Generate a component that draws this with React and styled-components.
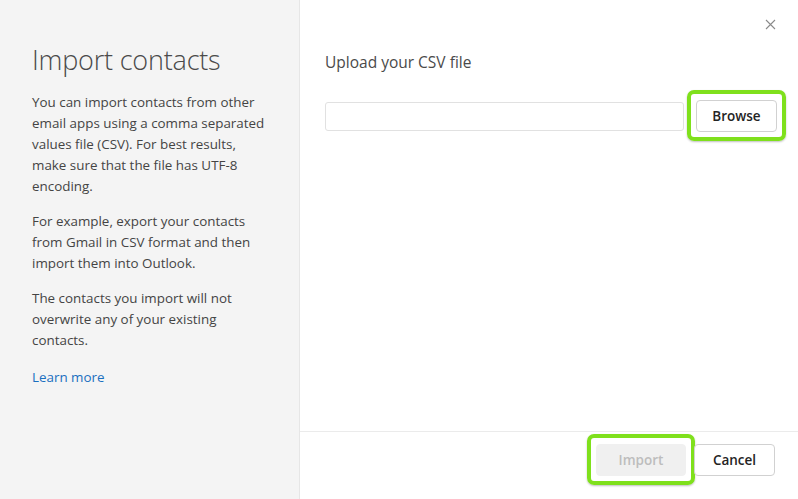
import React from "react";
import styled, { createGlobalStyle } from "styled-components";

const Global = createGlobalStyle`
  html, body {
    margin: 0;
    padding: 0;
    background: #ffffff;
  }
  body {
    font-family: "Open Sans", "Noto Sans", "Liberation Sans", sans-serif;
    color: #424242;
  }
`;

const Dialog = styled.div`
  display: flex;
  width: 798px;
  height: 499px;
  background: #fff;
  overflow: hidden;
`;

const Side = styled.aside`
  width: 300px;
  flex: none;
  box-sizing: border-box;
  padding: 40px 30px 0 32px;
  background: #f4f4f4;
  border-right: 1px solid #e6e6e6;
`;

const Title = styled.h1`
  margin: 0 0 12px;
  font-size: 27px;
  font-weight: 300;
  line-height: 40px;
  color: #4a4a4a;
  letter-spacing: -0.2px;
`;

const Para = styled.p`
  margin: 0 0 14px;
  font-size: 13.4px;
  line-height: 21px;
  color: #444;
`;

const LearnMore = styled.a`
  display: inline-block;
  margin-top: -3px;
  font-size: 13.4px;
  line-height: 21px;
  color: #1a6fc0;
  text-decoration: none;
  cursor: pointer;
`;

const Main = styled.section`
  flex: 1;
  display: flex;
  flex-direction: column;
  position: relative;
`;

const CloseBtn = styled.button`
  position: absolute;
  top: 14px;
  right: 18px;
  width: 20px;
  height: 20px;
  padding: 0;
  border: none;
  background: none;
  display: flex;
  align-items: center;
  justify-content: center;
  cursor: pointer;
`;

const Body = styled.div`
  flex: 1;
  padding: 50px 21px 0 25px;
`;

const Heading = styled.h2`
  margin: 0 0 26px;
  font-size: 15.5px;
  font-weight: 400;
  line-height: 24px;
  color: #4a4a4a;
`;

const FileRow = styled.div`
  display: flex;
  align-items: center;
  gap: 12px;
`;

const FileInput = styled.div`
  flex: 1;
  height: 29px;
  box-sizing: border-box;
  border: 1px solid #e1e1e1;
  border-radius: 3px;
  background: #fff;
`;

const Button = styled.button`
  position: relative;
  height: 32px;
  min-width: ${(p) => p.$w || 80}px;
  box-sizing: border-box;
  padding: 0 14px;
  border-radius: 4px;
  font-family: "Open Sans", "Noto Sans", "Liberation Sans", sans-serif;
  font-size: 13.5px;
  font-weight: 600;
  border: 1px solid ${(p) => (p.disabled ? "#f0f0f0" : "#d1d1d1")};
  background: ${(p) => (p.disabled ? "#f0f0f0" : "#fff")};
  color: ${(p) => (p.disabled ? "#bdbdbd" : "#242424")};
  cursor: ${(p) => (p.disabled ? "default" : "pointer")};

  ${(p) =>
    p.$highlight &&
    `
    &::after {
      content: "";
      position: absolute;
      inset: -11px -10px -10px -10px;
      border: 4px solid #7fe01c;
      border-radius: 7px;
      box-shadow: 0 1px 2px rgba(0, 0, 0, 0.25);
      pointer-events: none;
    }
  `}
`;

const Footer = styled.footer`
  height: 68px;
  flex: none;
  display: flex;
  align-items: flex-start;
  justify-content: flex-end;
  gap: 8px;
  padding: 12px 23px 0 0;
  box-sizing: border-box;
  border-top: 1px solid #ebebeb;
`;

const App = () => {
  return (
    <>
      <Global />
      <Dialog>
        <Side>
          <Title>Import contacts</Title>
          <Para>
            You can import contacts from other email apps using a comma
            separated values file (CSV). For best results, make sure that the
            file has UTF-8 encoding.
          </Para>
          <Para>
            For example, export your contacts from Gmail in CSV format and then
            import them into Outlook.
          </Para>
          <Para>
            The contacts you import will not overwrite any of your existing
            contacts.
          </Para>
          <LearnMore>Learn more</LearnMore>
        </Side>
        <Main>
          <CloseBtn aria-label="Close">
            <svg width="11" height="11" viewBox="0 0 11 11">
              <path d="M1 1 L10 10 M10 1 L1 10" stroke="#8a8a8a" strokeWidth="1.1" fill="none" />
            </svg>
          </CloseBtn>
          <Body>
            <Heading>Upload your CSV file</Heading>
            <FileRow>
              <FileInput />
              <Button $w={81} $highlight>Browse</Button>
            </FileRow>
          </Body>
          <Footer>
            <Button $w={90} disabled $highlight>Import</Button>
            <Button $w={81}>Cancel</Button>
          </Footer>
        </Main>
      </Dialog>
    </>
  );
};

export default App;
